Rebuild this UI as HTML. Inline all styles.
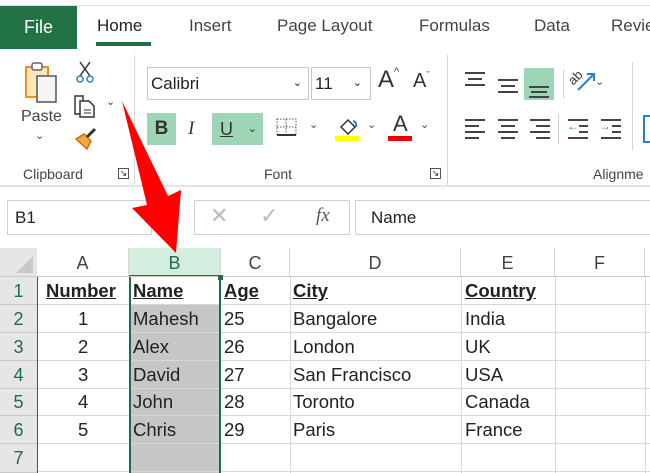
<!DOCTYPE html>
<html><head><meta charset="utf-8"><style>
*{margin:0;padding:0;box-sizing:border-box}
body{width:650px;height:473px;overflow:hidden;background:#fff;font-family:"Liberation Sans",sans-serif;color:#262626;position:relative}
.a{position:absolute}
.tab{position:absolute;top:16px;font-size:17px;color:#444}
.grp{position:absolute;top:166px;font-size:14px;color:#444}
.hl{background:#9fd5b7}
.cell{position:absolute;font-size:18.5px;color:#222;line-height:28px}
.rh{position:absolute;left:0;width:37px;text-align:center;color:#1e6d47;font-size:18px;background:#e6e6e6;border-bottom:1px solid #c8c8c8}
.ch{position:absolute;top:248px;height:29px;text-align:center;font-size:18px;color:#444;line-height:30px;border-right:1px solid #d4d4d4}
.hr{position:absolute;left:37px;width:613px;height:1px;background:#d8d8d8}
.vr{position:absolute;top:277px;height:196px;width:1px;background:#d8d8d8}
.line{position:absolute;height:2px;background:#444}
</style></head><body>
<!-- tabs -->
<div class="a" style="left:0;top:5px;width:650px;height:1px;background:#ddd"></div>
<div class="a" style="left:0;top:6px;width:77px;height:43px;background:#217346;color:#fff;font-size:18px;line-height:43px;text-align:center">File</div>
<div class="tab" style="left:97px;color:#222">Home</div>
<div class="a" style="left:96px;top:42px;width:55px;height:4px;background:#1e6d47"></div>
<div class="tab" style="left:189px">Insert</div>
<div class="tab" style="left:277px">Page Layout</div>
<div class="tab" style="left:419px">Formulas</div>
<div class="tab" style="left:534px">Data</div>
<div class="tab" style="left:611px">Revie</div>
<!-- ribbon -->
<div class="a" style="left:0;top:185px;width:650px;height:2px;background:#e4e4e4"></div>
<div class="a" style="left:134px;top:55px;width:1px;height:130px;background:#d6d6d6"></div>
<div class="a" style="left:447px;top:55px;width:1px;height:130px;background:#d6d6d6"></div>
<div class="a" style="left:632px;top:62px;width:1px;height:88px;background:#d6d6d6"></div>
<!-- paste -->
<svg class="a" style="left:24px;top:60px" width="42" height="45"><rect x="2" y="7" width="22" height="30" fill="#fde7b8" stroke="#e8912c" stroke-width="2"/><rect x="8" y="3" width="10" height="7" fill="#fff" stroke="#666" stroke-width="1.5" rx="2"/><rect x="13" y="16" width="19" height="26" fill="#f5f5f5" stroke="#555" stroke-width="1.5"/></svg>
<div class="a" style="left:21px;top:108px;font-size:16px;color:#444">Paste</div>
<div class="a" style="left:35px;top:129px;font-size:11px;color:#444">⌄</div>
<svg class="a" style="left:76px;top:60px" width="20" height="24"><path d="M4 2 L14 16 M14 2 L4 16" stroke="#333" stroke-width="1.5"/><circle cx="4" cy="19" r="3" fill="none" stroke="#2a7fd0" stroke-width="1.5"/><circle cx="14" cy="19" r="3" fill="none" stroke="#2a7fd0" stroke-width="1.5"/></svg>
<svg class="a" style="left:73px;top:93px" width="26" height="26"><path d="M2 3 H10 V21 H2 Z" fill="#fff" stroke="#333" stroke-width="1.5"/><path d="M7 8 H16 L21 13 V24 H7 Z" fill="#fff" stroke="#333" stroke-width="1.5"/><path d="M11 17 H18 M11 20 H18" stroke="#333"/></svg>
<div class="a" style="left:106px;top:95px;font-size:11px;color:#444">⌄</div>
<svg class="a" style="left:73px;top:127px" width="26" height="24"><path d="M3 12 L14 22 L18 14 L11 7 Z" fill="#f4a742" stroke="#d07200" stroke-width="1.5"/><path d="M14 10 L22 2" stroke="#333" stroke-width="3"/></svg>
<div class="grp" style="left:23px">Clipboard</div>
<div class="a" style="left:118px;top:168px;width:11px;height:11px;border:1px solid #555;font-size:9px;line-height:9px;text-align:center">↘</div>
<!-- font -->
<div class="a" style="left:147px;top:67px;width:162px;height:33px;border:1px solid #c6c6c6;font-size:17px;line-height:31px;padding-left:3px;color:#222">Calibri<span style="position:absolute;right:6px;font-size:11px">⌄</span></div>
<div class="a" style="left:311px;top:67px;width:60px;height:33px;border:1px solid #c6c6c6;font-size:17px;line-height:31px;padding-left:3px;color:#222">11<span style="position:absolute;right:8px;font-size:11px">⌄</span></div>
<div class="a" style="left:378px;top:66px;font-size:24px;color:#333">A<span style="font-size:11px;vertical-align:top">^</span></div>
<div class="a" style="left:413px;top:70px;font-size:20px;color:#333">A<span style="font-size:11px;vertical-align:top;color:#2a7fd0">ˇ</span></div>
<div class="a hl" style="left:147px;top:113px;width:29px;height:32px;font-size:19px;font-weight:bold;line-height:32px;text-align:center;color:#333">B</div>
<div class="a" style="left:188px;top:113px;font-size:19px;font-style:italic;font-family:'Liberation Serif',serif;line-height:32px;color:#333">I</div>
<div class="a hl" style="left:212px;top:113px;width:51px;height:32px;font-size:18px;line-height:32px;padding-left:8px;color:#333"><u>U</u><span style="position:absolute;right:6px;font-size:11px">⌄</span></div>
<svg class="a" style="left:275px;top:117px" width="24" height="22"><rect x="2" y="2" width="19" height="16" fill="none" stroke="#555" stroke-dasharray="1.5 1.5"/><path d="M11 2 V18 M2 10 H21" stroke="#555" stroke-dasharray="1.5 1.5"/><path d="M2 18 H21" stroke="#333" stroke-width="2"/></svg>
<div class="a" style="left:309px;top:118px;font-size:11px;color:#444">⌄</div>
<svg class="a" style="left:335px;top:115px" width="26" height="28"><path d="M6 12 L13 5 L20 12 L13 19 Z" fill="none" stroke="#333" stroke-width="1.5"/><path d="M18 6 Q22 7 21 12" stroke="#2a7fd0" stroke-width="2" fill="none"/><rect x="0" y="21" width="24" height="5" fill="#ffff00"/></svg>
<div class="a" style="left:367px;top:118px;font-size:11px;color:#444">⌄</div>
<div class="a" style="left:393px;top:111px;font-size:22px;color:#333">A</div>
<div class="a" style="left:388px;top:136px;width:24px;height:5px;background:#e00"></div>
<div class="a" style="left:420px;top:118px;font-size:11px;color:#444">⌄</div>
<div class="grp" style="left:264px">Font</div>
<div class="a" style="left:430px;top:168px;width:11px;height:11px;border:1px solid #555;font-size:9px;line-height:9px;text-align:center">↘</div>
<!-- alignment -->
<div class="line" style="left:465px;top:72px;width:20px"></div><div class="line" style="left:468px;top:78px;width:14px"></div><div class="line" style="left:465px;top:84px;width:20px"></div>
<div class="line" style="left:498px;top:79px;width:20px"></div><div class="line" style="left:501px;top:85px;width:14px"></div><div class="line" style="left:498px;top:91px;width:20px"></div>
<div class="a hl" style="left:524px;top:68px;width:30px;height:32px"></div>
<div class="line" style="left:529px;top:86px;width:20px"></div><div class="line" style="left:531px;top:91px;width:16px"></div><div class="line" style="left:529px;top:96px;width:20px"></div>
<div class="a" style="left:563px;top:70px;width:1px;height:28px;background:#ccc"></div>
<div class="a" style="left:568px;top:70px;font-size:13px;transform:rotate(-45deg);color:#333">ab</div>
<svg class="a" style="left:574px;top:68px" width="24" height="26"><path d="M4 22 L20 6 M13 6 H20 V13" stroke="#2a7fd0" stroke-width="2" fill="none"/></svg>
<div class="a" style="left:595px;top:75px;font-size:11px;color:#444">⌄</div>
<div class="line" style="left:465px;top:119px;width:20px"></div><div class="line" style="left:465px;top:125px;width:14px"></div><div class="line" style="left:465px;top:131px;width:20px"></div><div class="line" style="left:465px;top:137px;width:14px"></div>
<div class="line" style="left:498px;top:119px;width:20px"></div><div class="line" style="left:501px;top:125px;width:14px"></div><div class="line" style="left:498px;top:131px;width:20px"></div><div class="line" style="left:501px;top:137px;width:14px"></div>
<div class="line" style="left:530px;top:119px;width:20px"></div><div class="line" style="left:536px;top:125px;width:14px"></div><div class="line" style="left:530px;top:131px;width:20px"></div><div class="line" style="left:536px;top:137px;width:14px"></div>
<div class="a" style="left:558px;top:114px;width:1px;height:30px;background:#ccc"></div>
<div class="line" style="left:568px;top:119px;width:20px"></div><div class="line" style="left:579px;top:125px;width:9px"></div><div class="line" style="left:579px;top:131px;width:9px"></div><div class="line" style="left:568px;top:137px;width:20px"></div>
<div class="a" style="left:567px;top:119px;font-size:12px;color:#2a7fd0;font-weight:bold">←</div>
<div class="line" style="left:601px;top:119px;width:20px"></div><div class="line" style="left:612px;top:125px;width:9px"></div><div class="line" style="left:612px;top:131px;width:9px"></div><div class="line" style="left:601px;top:137px;width:20px"></div>
<div class="a" style="left:599px;top:119px;font-size:12px;color:#2a7fd0;font-weight:bold">→</div>
<div class="a" style="left:643px;top:115px;width:10px;height:28px;border:2px solid #2a7fd0"></div>
<div class="grp" style="left:593px">Alignme</div>
<!-- formula bar -->
<div class="a" style="left:7px;top:200px;width:145px;height:35px;border:1px solid #d0d0d0;font-size:17px;line-height:33px;padding-left:7px;color:#222">B1</div>
<div class="a" style="left:194px;top:200px;width:156px;height:35px;border:1px solid #d0d0d0"></div>
<div class="a" style="left:210px;top:203px;font-size:22px;color:#bbb">✕</div>
<div class="a" style="left:260px;top:203px;font-size:22px;color:#bbb">✓</div>
<div class="a" style="left:316px;top:205px;font-size:19px;font-style:italic;font-family:'Liberation Serif',serif;color:#555">fx</div>
<div class="a" style="left:355px;top:200px;width:300px;height:35px;border:1px solid #d0d0d0;font-size:17px;line-height:33px;padding-left:15px;color:#222">Name</div>
<!-- grid headers -->
<div class="a" style="left:0;top:248px;width:37px;height:29px;background:#e6e6e6"></div>
<svg class="a" style="left:14px;top:254px" width="20" height="20"><path d="M19 2 V19 H2 Z" fill="#c8c8c8"/></svg>
<div class="ch" style="left:37px;width:92px">A</div>
<div class="ch" style="left:129px;width:92px;background:#d3eddf;color:#1e6d47;border-bottom:2px solid #1e6d47">B</div>
<div class="ch" style="left:221px;width:69px">C</div>
<div class="ch" style="left:290px;width:171px">D</div>
<div class="ch" style="left:461px;width:94px">E</div>
<div class="ch" style="left:555px;width:90px">F</div>
<div class="a" style="left:0;top:276px;width:650px;height:1px;background:#c8c8c8"></div>
<!-- gray B fill -->
<div class="a" style="left:129px;top:304px;width:92px;height:169px;background:#c6c6c6"></div>
<div class="hr" style="top:304px"></div><div class="hr" style="top:332px"></div><div class="hr" style="top:360px"></div><div class="hr" style="top:388px"></div><div class="hr" style="top:415px"></div><div class="hr" style="top:443px"></div><div class="hr" style="top:471px"></div>
<div class="vr" style="left:290px"></div><div class="vr" style="left:461px"></div><div class="vr" style="left:555px"></div><div class="vr" style="left:645px"></div>
<div class="a" style="left:36px;top:277px;width:2px;height:196px;background:#1e6d47"></div>
<div class="a" style="left:129px;top:277px;width:2px;height:196px;background:#1e6d47"></div>
<div class="a" style="left:219px;top:277px;width:2px;height:196px;background:#1e6d47"></div>
<div class="a" style="left:218px;top:275px;width:5px;height:5px;background:#1e6d47"></div>
<div class="rh" style="top:277px;height:28px;line-height:28px">1</div>
<div class="rh" style="top:305px;height:28px;line-height:28px">2</div>
<div class="rh" style="top:333px;height:28px;line-height:28px">3</div>
<div class="rh" style="top:361px;height:28px;line-height:28px">4</div>
<div class="rh" style="top:389px;height:27px;line-height:27px">5</div>
<div class="rh" style="top:416px;height:28px;line-height:28px">6</div>
<div class="rh" style="top:444px;height:29px;line-height:28px">7</div>
<!-- cells -->
<div class="cell" style="left:46px;top:277px;font-weight:bold;text-decoration:underline">Number</div>
<div class="cell" style="left:133px;top:277px;font-weight:bold;text-decoration:underline">Name</div>
<div class="cell" style="left:224px;top:277px;font-weight:bold;text-decoration:underline">Age</div>
<div class="cell" style="left:293px;top:277px;font-weight:bold;text-decoration:underline">City</div>
<div class="cell" style="left:465px;top:277px;font-weight:bold;text-decoration:underline">Country</div>
<div class="cell" style="left:78px;top:305px">1</div><div class="cell" style="left:133px;top:305px">Mahesh</div><div class="cell" style="left:224px;top:305px">25</div><div class="cell" style="left:293px;top:305px">Bangalore</div><div class="cell" style="left:465px;top:305px">India</div>
<div class="cell" style="left:78px;top:333px">2</div><div class="cell" style="left:133px;top:333px">Alex</div><div class="cell" style="left:224px;top:333px">26</div><div class="cell" style="left:293px;top:333px">London</div><div class="cell" style="left:465px;top:333px">UK</div>
<div class="cell" style="left:78px;top:361px">3</div><div class="cell" style="left:133px;top:361px">David</div><div class="cell" style="left:224px;top:361px">27</div><div class="cell" style="left:293px;top:361px">San Francisco</div><div class="cell" style="left:465px;top:361px">USA</div>
<div class="cell" style="left:78px;top:388px">4</div><div class="cell" style="left:133px;top:388px">John</div><div class="cell" style="left:224px;top:388px">28</div><div class="cell" style="left:293px;top:388px">Toronto</div><div class="cell" style="left:465px;top:388px">Canada</div>
<div class="cell" style="left:78px;top:416px">5</div><div class="cell" style="left:133px;top:416px">Chris</div><div class="cell" style="left:224px;top:416px">29</div><div class="cell" style="left:293px;top:416px">Paris</div><div class="cell" style="left:465px;top:416px">France</div>
<!-- arrow -->
<svg class="a" style="left:0;top:0" width="650" height="473"><polygon points="122,101 168,196 181,190 176,253 132,208 147,205" fill="#f00"/></svg>
</body></html>
